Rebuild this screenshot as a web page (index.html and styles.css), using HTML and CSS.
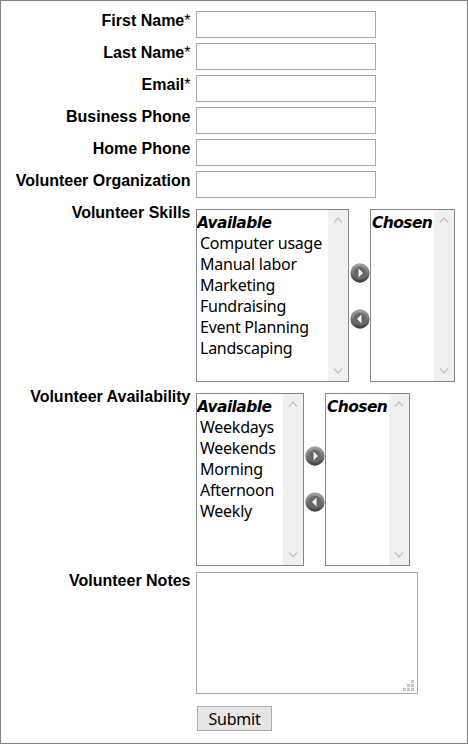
FILE: index.html
```html
<!DOCTYPE html>
<html lang="en">
<head>
<meta charset="utf-8">
<title>Volunteer Form</title>
<link rel="stylesheet" href="styles.css">
</head>
<body>
<svg class="defs" width="0" height="0" aria-hidden="true">
  <defs>
    <linearGradient id="ball" x1="0" y1="0" x2="0" y2="1">
      <stop offset="0" stop-color="#a4a4a4"/>
      <stop offset="0.5" stop-color="#777"/>
      <stop offset="1" stop-color="#3c3c3c"/>
    </linearGradient>
    <radialGradient id="core" cx="50%" cy="50%" r="50%">
      <stop offset="0" stop-color="#5a5a5a"/>
      <stop offset="1" stop-color="#6e6e6e"/>
    </radialGradient>
  </defs>
</svg>
<form class="form">
  <div class="row"><label class="label">First Name<span class="req">*</span></label><input class="text" type="text"></div>
  <div class="row"><label class="label">Last Name<span class="req">*</span></label><input class="text" type="text"></div>
  <div class="row"><label class="label">Email<span class="req">*</span></label><input class="text" type="text"></div>
  <div class="row"><label class="label">Business Phone</label><input class="text" type="text"></div>
  <div class="row"><label class="label">Home Phone</label><input class="text" type="text"></div>
  <div class="row"><label class="label">Volunteer Organization</label><input class="text" type="text"></div>

  <div class="row row-list">
    <label class="label">Volunteer Skills</label>
    <div class="picker">
      <div class="list list-skills">
        <div class="items">
          <div class="head">Available</div>
          <div class="item">Computer usage</div>
          <div class="item">Manual labor</div>
          <div class="item">Marketing</div>
          <div class="item">Fundraising</div>
          <div class="item">Event Planning</div>
          <div class="item">Landscaping</div>
        </div>
        <div class="scroll">
          <svg class="chev" viewBox="0 0 10 6"><path d="M1 5.500 5 1l4 4.500"/></svg>
          <svg class="chev" viewBox="0 0 10 6"><path d="M1 .5 5 5l4-4.500"/></svg>
        </div>
      </div>
      <div class="arrows">
        <svg class="ball" viewBox="0 0 20 20"><circle cx="10" cy="10" r="9.700" fill="url(#ball)"/><circle cx="10" cy="10" r="6.500" fill="url(#core)"/><path class="tri" d="M8.500 5.500 13 10l-4.500 4.500z"/></svg>
        <svg class="ball" viewBox="0 0 20 20"><circle cx="10" cy="10" r="9.700" fill="url(#ball)"/><circle cx="10" cy="10" r="6.500" fill="url(#core)"/><path class="tri" d="M11.500 5.500 7 10l4.500 4.500z"/></svg>
      </div>
      <div class="list list-chosen">
        <div class="items"><div class="head">Chosen</div></div>
        <div class="scroll">
          <svg class="chev" viewBox="0 0 10 6"><path d="M1 5.500 5 1l4 4.500"/></svg>
          <svg class="chev" viewBox="0 0 10 6"><path d="M1 .5 5 5l4-4.500"/></svg>
        </div>
      </div>
    </div>
  </div>

  <div class="row row-list">
    <label class="label">Volunteer Availability</label>
    <div class="picker">
      <div class="list list-avail">
        <div class="items">
          <div class="head">Available</div>
          <div class="item">Weekdays</div>
          <div class="item">Weekends</div>
          <div class="item">Morning</div>
          <div class="item">Afternoon</div>
          <div class="item">Weekly</div>
        </div>
        <div class="scroll">
          <svg class="chev" viewBox="0 0 10 6"><path d="M1 5.500 5 1l4 4.500"/></svg>
          <svg class="chev" viewBox="0 0 10 6"><path d="M1 .5 5 5l4-4.500"/></svg>
        </div>
      </div>
      <div class="arrows">
        <svg class="ball" viewBox="0 0 20 20"><circle cx="10" cy="10" r="9.700" fill="url(#ball)"/><circle cx="10" cy="10" r="6.500" fill="url(#core)"/><path class="tri" d="M8.500 5.500 13 10l-4.500 4.500z"/></svg>
        <svg class="ball" viewBox="0 0 20 20"><circle cx="10" cy="10" r="9.700" fill="url(#ball)"/><circle cx="10" cy="10" r="6.500" fill="url(#core)"/><path class="tri" d="M11.500 5.500 7 10l4.500 4.500z"/></svg>
      </div>
      <div class="list list-chosen">
        <div class="items"><div class="head">Chosen</div></div>
        <div class="scroll">
          <svg class="chev" viewBox="0 0 10 6"><path d="M1 5.500 5 1l4 4.500"/></svg>
          <svg class="chev" viewBox="0 0 10 6"><path d="M1 .5 5 5l4-4.500"/></svg>
        </div>
      </div>
    </div>
  </div>

  <div class="row row-notes">
    <label class="label">Volunteer Notes</label>
    <div class="notes">
      <svg class="grip" viewBox="0 0 11 11"><path d="M8 0h3v3H8zM4 4h3v3H4zM8 4h3v3H8zM0 8h3v3H0zM4 8h3v3H4zM8 8h3v3H8z"/></svg>
    </div>
  </div>

  <div class="row row-submit"><button class="submit" type="button">Submit</button></div>
</form>
</body>
</html>
```
FILE: styles.css
```css
* { box-sizing: border-box; }
html, body { margin: 0; padding: 0; }
body {
  width: 468px;
  height: 744px;
  border: 1px solid #808080;
  background: #fff;
  overflow: hidden;
  font-family: "Liberation Sans", Arial, sans-serif;
  color: #000;
}
.defs { position: absolute; }
.form { display: flex; flex-direction: column; padding-top: 10px; }
.row { display: flex; align-items: flex-start; gap: 5.500px; height: 32px; }
.row-list { height: 184px; }
.row-notes { height: 135px; }
.row-submit { padding-left: 196px; }
.label {
  width: 189.500px;
  padding-top: 1px;
  text-align: right;
  font-size: 16px;
  font-weight: 700;
  line-height: 18px;
}
.req { font-weight: 400; }
.text {
  display: block;
  width: 180px;
  height: 27px;
  margin: 0;
  border: 1px solid #a9a9a9;
  background: #fff;
}
.picker { display: flex; align-items: stretch; height: 173px; margin-top: 6px; }
.list {
  display: flex;
  height: 173px;
  border: 1px solid #828790;
  background: #fff;
}
.list-skills { width: 153px; }
.list-avail { width: 108px; }
.list-chosen { width: 85px; }
.list-chosen .head { padding-left: 1px; }
.items { flex: 1; min-width: 0; overflow: hidden; padding-top: 3px; }
.head {
  font-family: "DejaVu Sans", sans-serif;
  font-size: 15.500px;
  font-weight: 700;
  font-style: italic;
  line-height: 20px;
  letter-spacing: -0.6px;
  white-space: nowrap;
}
.item {
  font-family: "Noto Sans", sans-serif;
  font-size: 16px;
  line-height: 21px;
  letter-spacing: -0.25px;
  padding-left: 3px;
  white-space: nowrap;
}
.scroll {
  width: 20px;
  flex: none;
  background: #f0f0f0;
  display: flex;
  flex-direction: column;
  justify-content: space-between;
  align-items: center;
  padding: 7px 0;
}
.chev { display: block; width: 10px; height: 6px; fill: none; stroke: #c4c4c4; stroke-width: 1.300; }
.arrows {
  width: 21px;
  display: flex;
  flex-direction: column;
  align-items: flex-start;
  gap: 26px;
  padding: 53px 0 0 1px;
}
.list-skills + .arrows { padding-top: 54px; }
.ball { display: block; width: 20px; height: 20px; }
.tri { fill: #f2f2f2; }
.notes {
  width: 222px;
  height: 122px;
  margin-top: 1px;
  border: 1px solid #a9a9a9;
  background: #fff;
  display: flex;
  align-items: flex-end;
  justify-content: flex-end;
  padding: 0 3px 2px 0;
}
.grip { display: block; width: 11px; height: 11px; fill: #c4c4c4; }
.submit {
  width: 75px;
  height: 25px;
  margin: 0;
  padding: 0;
  border: 1px solid #adadad;
  background: #e6e6e6;
  font-family: "Noto Sans", sans-serif;
  font-size: 16px;
  letter-spacing: -0.2px;
  color: #000;
}
```
